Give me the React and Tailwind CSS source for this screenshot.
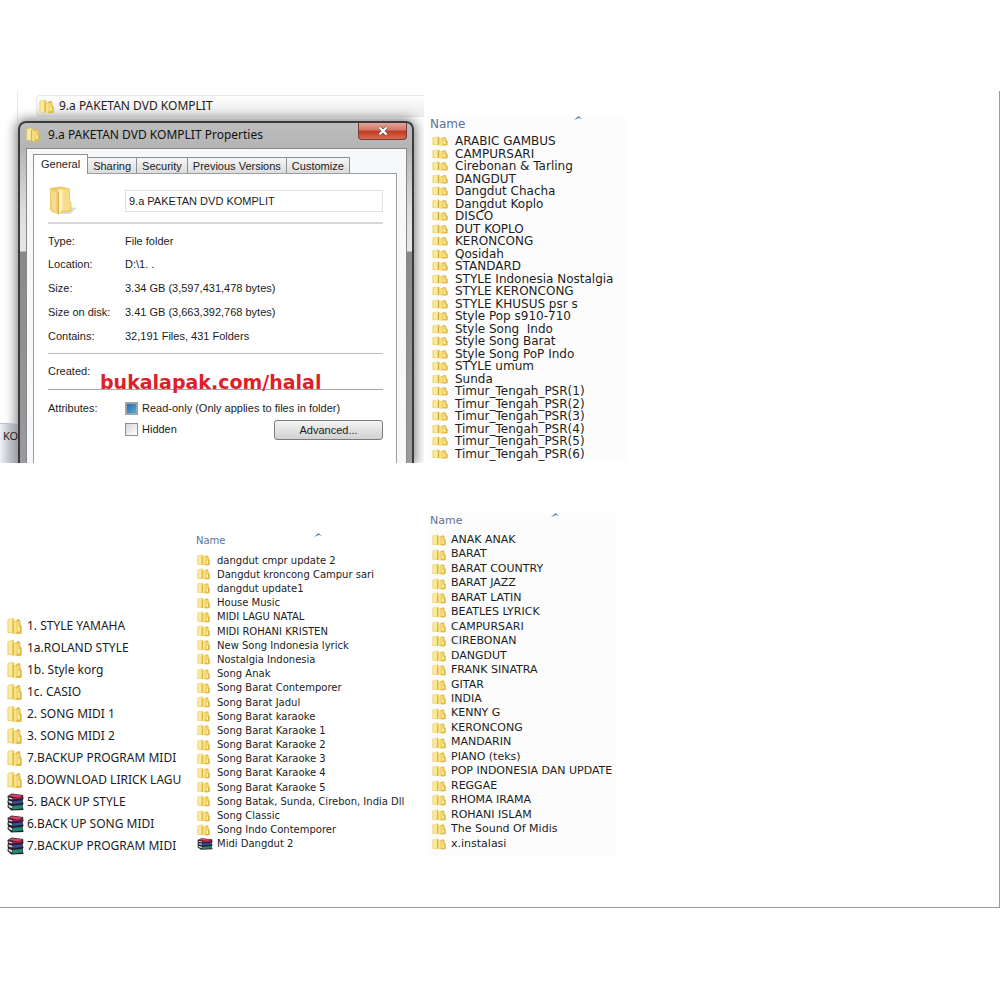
import React, { useEffect, useRef } from "react";

const rootFolders = [
  { name: "1. STYLE YAMAHA" },
  { name: "1a.ROLAND STYLE" },
  { name: "1b. Style korg" },
  { name: "1c. CASIO" },
  { name: "2. SONG MIDI 1" },
  { name: "3. SONG MIDI 2" },
  { name: "7.BACKUP PROGRAM MIDI" },
  { name: "8.DOWNLOAD LIRICK LAGU" },
  { name: "5. BACK UP STYLE", archive: true },
  { name: "6.BACK UP SONG MIDI", archive: true },
  { name: "7.BACKUP PROGRAM MIDI", archive: true },
];

const styleFolders = [
  "ARABIC GAMBUS",
  "CAMPURSARI",
  "Cirebonan & Tarling",
  "DANGDUT",
  "Dangdut Chacha",
  "Dangdut Koplo",
  "DISCO",
  "DUT KOPLO",
  "KERONCONG",
  "Qosidah",
  "STANDARD",
  "STYLE Indonesia Nostalgia",
  "STYLE KERONCONG",
  "STYLE KHUSUS psr s",
  "Style Pop s910-710",
  "Style Song  Indo",
  "Style Song Barat",
  "Style Song PoP Indo",
  "STYLE umum",
  "Sunda",
  "Timur_Tengah_PSR(1)",
  "Timur_Tengah_PSR(2)",
  "Timur_Tengah_PSR(3)",
  "Timur_Tengah_PSR(4)",
  "Timur_Tengah_PSR(5)",
  "Timur_Tengah_PSR(6)",
];

const songFolders = [
  { name: "dangdut cmpr update 2" },
  { name: "Dangdut kroncong Campur sari" },
  { name: "dangdut update1" },
  { name: "House Music" },
  { name: "MIDI LAGU NATAL" },
  { name: "MIDI ROHANI KRISTEN" },
  { name: "New Song Indonesia lyrick" },
  { name: "Nostalgia Indonesia" },
  { name: "Song Anak" },
  { name: "Song Barat Contemporer" },
  { name: "Song Barat Jadul" },
  { name: "Song Barat karaoke" },
  { name: "Song Barat Karaoke 1" },
  { name: "Song Barat Karaoke 2" },
  { name: "Song Barat Karaoke 3" },
  { name: "Song Barat Karaoke 4" },
  { name: "Song Barat Karaoke 5" },
  { name: "Song Batak, Sunda, Cirebon, India Dll" },
  { name: "Song Classic" },
  { name: "Song Indo Contemporer" },
  { name: "Midi Dangdut 2", archive: true },
];

const midiFolders = [
  "ANAK ANAK",
  "BARAT",
  "BARAT COUNTRY",
  "BARAT JAZZ",
  "BARAT LATIN",
  "BEATLES LYRICK",
  "CAMPURSARI",
  "CIREBONAN",
  "DANGDUT",
  "FRANK SINATRA",
  "GITAR",
  "INDIA",
  "KENNY G",
  "KERONCONG",
  "MANDARIN",
  "PIANO (teks)",
  "POP INDONESIA DAN UPDATE",
  "REGGAE",
  "RHOMA IRAMA",
  "ROHANI ISLAM",
  "The Sound Of Midis",
  "x.instalasi",
];

const details = [
  ["Type:", "File folder"],
  ["Location:", "D:\\1. ."],
  ["Size:", "3.34 GB (3,597,431,478 bytes)"],
  ["Size on disk:", "3.41 GB (3,663,392,768 bytes)"],
  ["Contains:", "32,191 Files, 431 Folders"],
];

const FolderIcon = ({ className }) => (
  <svg viewBox="0 0 16 18" preserveAspectRatio="none" className={className} aria-hidden="true">
    <path d="M.5 2.500 6 .8 8 2.200V16.500L.5 16Z" fill="#ecd062" />
    <path d="M1.500 3 5.500 1.600V15.500L1.500 15.300Z" fill="#faeaa0" />
    <path d="M8.500 4 11 3v-1l3 .6.5 5.400 1.200 1v7.500l-3 .8-4.200-.8Z" fill="#dfba45" />
    <path d="M9.500 5 13.200 3.800V14.500l-3.700.6Z" fill="#f1d671" />
    <path d="M6 3.500 9.800 4.800V17.800L6 15.900Z" fill="#f8e185" />
    <path d="M6 3.500V15.900l1 .5V4Z" fill="#cfa634" />
    <path d="M12.300 10h1.200v4.500h-1.200Z" fill="#fff8d2" />
  </svg>
);

const LargeFolderIcon = () => (
  <svg viewBox="0 0 30 31" className="w-[30px] h-[31px]" aria-hidden="true">
    <path d="M20 22 29 23 22 29 8 29Z" fill="#dcdae4" />
    <path d="M2 3 13 1.500 22 3.500V16l1.500 2v8.500L12 28 2 25Z" fill="#eccb68" />
    <path d="M13 4 21 4.500V16l1.200 2v7l-9.200 1Z" fill="#f6dd8b" />
    <path d="M11 4 14.500 5V25L10 29.500V7Z" fill="#fdf2bd" />
    <path d="M2 3 10.500 7.500V29.500L3 26.500Z" fill="#f0cd70" />
    <path d="M3 5 8 8v19l-4-1.600Z" fill="#f6dc92" />
    <path d="M10 7.500v22l1-.8V7Z" fill="#d6ad47" />
  </svg>
);

const ArchiveIcon = ({ className }) => (
  <svg viewBox="0 0 18 18" preserveAspectRatio="none" className={className} aria-hidden="true">
    <path d="M.5 3 5 .5l12 1.500.5 4-1 1 1 4-1 1 1 5-13 .5L.5 14l.5-3L.5 9 1 6Z" fill="#26222c" />
    <path d="m1.500 3 4-1.800 11 1.200-3.500 2Z" fill="#d9456d" />
    <path d="m6 4.800 10.500-1.600v2L6 6.600Z" fill="#b3184b" />
    <path d="m1.500 4.200 4 1v1.400L2 5.800Z" fill="#f1d7dc" />
    <path d="m6 8.400 10.500-1.200v2.600L6 11Z" fill="#3a4c9c" />
    <path d="m1.500 7.600 4 1.200v1.600L2 9.400Z" fill="#dcdde8" />
    <path d="m6 13 10.500-1v3.400L6 16.400Z" fill="#1d8c78" />
    <path d="m1.500 11.800 4 1.400v2.200L2 14Z" fill="#d7e8e3" />
  </svg>
);

const ColumnHeader = ({ className }) => (
  <button type="button" className={`flex items-center text-left text-[#5c7396] ${className}`}>
    Name
  </button>
);

const SortArrow = () => (
  <svg viewBox="0 0 8 4" className="w-2 h-1" aria-hidden="true">
    <path d="M0 4 4.500 0 8 3 5 2Z" fill="#5f86a8" />
  </svg>
);

const Tab = ({ children }) => (
  <button
    type="button"
    role="tab"
    aria-selected="false"
    className="h-4 px-[5px] border border-l-0 border-b-0 border-[#8c9196] bg-linear-to-b from-[#f6f6f6] to-[#dcdcdc] leading-3 whitespace-nowrap"
  >
    {children}
  </button>
);

const PropertiesDialog = () => {
  const readOnly = useRef(null);

  useEffect(() => {
    readOnly.current.indeterminate = true;
  }, []);

  return (
    <section
      role="dialog"
      aria-labelledby="dialog-title"
      className="ml-[18px] mr-[10px] h-[342px] flex flex-col rounded-t-lg border-2 border-b-0 border-[#3b3b3d] bg-[linear-gradient(to_bottom,#bdbdbd_0px,#b4b4b4_24px,#dedede_90px,#e6e6e6_128px,#898989_129px,#9b9b9b_340px)] pl-[6px] pr-[5px] shadow-[0_0_12px_2px_rgba(0,0,0,0.5)]"
    >
      <header className="flex h-[25px] items-start">
        <FolderIcon className="mt-1 w-[14px] h-[15px]" />
        <h1
          id="dialog-title"
          className="ml-2 flex-1 text-[12px] leading-6 font-['Noto_Sans',sans-serif] text-[#111]"
        >
          9.a PAKETAN DVD KOMPLIT Properties
        </h1>
        <button
          type="button"
          aria-label="Close"
          className="flex h-[17px] w-[49px] items-center justify-center rounded-b border border-t-0 border-[#7d3a33] bg-[linear-gradient(to_bottom,#e2a498_0%,#d17565_45%,#c03a22_50%,#d9694e_100%)]"
        >
          <svg viewBox="0 0 12 10" className="w-3 h-[10px]" aria-hidden="true">
            <path d="m2.500 1.500 7 7m0-7-7 7" stroke="#6f4a48" strokeWidth="3.600" />
            <path d="m2.500 1.500 7 7m0-7-7 7" stroke="#fff" strokeWidth="2.200" />
          </svg>
        </button>
      </header>

      <div className="flex flex-1 flex-col border border-b-0 border-[#85898c] bg-[#f7f8f9] pl-[6px] pr-[9px] pt-[5px]">
        <div role="tablist" className="flex items-end">
          <button
            type="button"
            role="tab"
            aria-selected="true"
            className="z-10 -mb-px h-5 px-[7px] border border-b-0 border-[#8c9196] bg-white leading-4 pb-[2px]"
          >
            General
          </button>
          <Tab>Sharing</Tab>
          <Tab>Security</Tab>
          <Tab>Previous Versions</Tab>
          <Tab>Customize</Tab>
        </div>

        <div className="flex-1 border border-b-0 border-[#9a9ea3] bg-white pl-[14px] pr-[13px]">
          <div className="flex h-[50px] items-center border-b-2 border-[#d6d8d9] pt-[5px]">
            <LargeFolderIcon />
            <input
              type="text"
              aria-label="Folder name"
              defaultValue="9.a PAKETAN DVD KOMPLIT"
              className="ml-[47px] h-[22px] min-w-0 flex-1 border border-[#dfe2e4] bg-white px-[3px] text-[11px]"
            />
          </div>

          <dl className="mt-[5px] mb-[5px] grid h-[119px] auto-rows-fr">
            {details.map(([label, value]) => (
              <div key={label} className="flex items-center">
                <dt className="w-[77px]">{label}</dt>
                <dd>{value}</dd>
              </div>
            ))}
          </dl>

          <div className="relative h-[37px] border-t border-b border-t-[#bfbfbf] border-b-[#a6a6a6] leading-[35px]">
            Created:
            <a
              href="#halal"
              className="absolute left-[52px] top-[17px] font-['DejaVu_Sans',sans-serif] text-[19px] leading-[22px] font-bold text-[#df1f2b]"
            >
              bukalapak.com/halal
            </a>
          </div>

          <div className="flex pt-[9px]">
            <span className="w-[77px] leading-[18px]">Attributes:</span>
            <div className="flex-1">
              <label className="flex h-[18px] items-center gap-1">
                <input
                  ref={readOnly}
                  type="checkbox"
                  className="size-[13px] appearance-none border-2 border-[#9aa5ac] bg-linear-to-br from-[#2a6ea6] to-[#4fa9dc]"
                />
                Read-only (Only applies to files in folder)
              </label>
              <div className="mt-[3px] flex items-start justify-between">
                <label className="flex h-[18px] items-center gap-1">
                  <input
                    type="checkbox"
                    className="size-[13px] appearance-none border border-[#8e8f8f] bg-linear-to-br from-[#d4d6d8] to-white"
                  />
                  Hidden
                </label>
                <button
                  type="button"
                  className="h-5 w-[109px] rounded-[3px] border border-[#7c7c7c] bg-linear-to-b from-[#f4f4f4] to-[#d2d2d2] leading-[18px]"
                >
                  Advanced...
                </button>
              </div>
            </div>
          </div>
        </div>
      </div>
    </section>
  );
};

const App = () => {
  return (
    <div className="min-h-screen bg-white pt-[91px] font-['Liberation_Sans',Arial,sans-serif] text-[11px] text-[#1c1c1c]">
      <main className="border-r border-b border-[#9b9b9b] pb-[50px]">
        <div className="grid grid-cols-[424px_1fr] gap-x-1">
          <div className="relative h-[372px] overflow-hidden bg-white">
            <div className="ml-[17px] h-[30px] border-l border-[#e1e8ee] pl-[18px] pt-1">
              <div className="flex h-[22px] items-center rounded-l border border-r-0 border-[#e8e8e8] bg-linear-to-b from-[#fdfdfd] to-[#ececec] pl-[2px] text-[12px] font-['Noto_Sans',sans-serif]">
                <FolderIcon className="w-[15px] h-[15px]" />
                <span className="ml-[5px]">9.a PAKETAN DVD KOMPLIT</span>
              </div>
            </div>
            <PropertiesDialog />
            <span className="absolute left-0 top-[332px] h-10 w-[18px] border-t border-[#a9c3e4] bg-linear-to-r from-[#eef1f7] to-[#9a9ca3] pl-[3px] pt-1 text-[11px] font-['Noto_Sans',sans-serif]">
              KO
            </span>
          </div>

          <section className="mt-[25px] w-[198px] self-start bg-[#fcfcfc] pb-px font-['DejaVu_Sans',sans-serif] text-[12px] leading-3">
            <div className="flex h-[19px] items-start">
              <ColumnHeader className="mt-[2px] ml-[2px] w-[144px]" />
              <SortArrow />
            </div>
            <ul className="grid h-[325px] auto-rows-fr pl-1">
              {styleFolders.map((name) => (
                <li key={name} className="flex items-center gap-[7px] whitespace-pre">
                  <FolderIcon className="h-[10px] w-4" />
                  {name}
                </li>
              ))}
            </ul>
          </section>
        </div>

        <div className="mt-[50px] grid grid-cols-[196px_228px_1fr] gap-x-1">
          <ul className="self-end -mr-1 pl-[7px] font-['Noto_Sans',sans-serif] text-[12px]">
            {rootFolders.map((item, index) => (
              <li key={index} className="flex h-[22px] items-center whitespace-nowrap">
                <span className="w-5">
                  {item.archive ? (
                    <ArchiveIcon className="h-[18px] w-[17px]" />
                  ) : (
                    <FolderIcon className="h-[18px] w-[15px]" />
                  )}
                </span>
                {item.name}
              </li>
            ))}
          </ul>

          <section className="-ml-1 self-end pb-[6px] font-['DejaVu_Sans',sans-serif] text-[10px]">
            <div className="flex h-5 items-start">
              <ColumnHeader className="w-[118px]" />
              <SortArrow />
            </div>
            <ul className="grid h-[298px] auto-rows-fr pl-px">
              {songFolders.map((item) => (
                <li key={item.name} className="flex items-center whitespace-nowrap">
                  <span className="w-5">
                    {item.archive ? (
                      <ArchiveIcon className="h-3 w-4" />
                    ) : (
                      <FolderIcon className="h-3 w-[13px]" />
                    )}
                  </span>
                  {item.name}
                </li>
              ))}
            </ul>
          </section>

          <section className="-ml-1 w-[188px] bg-[#fcfcfc] pb-[6px] font-['DejaVu_Sans',sans-serif] text-[11px]">
            <div className="flex h-5 items-start">
              <ColumnHeader className="ml-[2px] w-[121px]" />
              <SortArrow />
            </div>
            <ul className="grid h-[318px] auto-rows-fr pl-1">
              {midiFolders.map((name) => (
                <li key={name} className="flex items-center gap-[5px] whitespace-nowrap">
                  <FolderIcon className="h-3 w-[14px]" />
                  {name}
                </li>
              ))}
            </ul>
          </section>
        </div>
      </main>
    </div>
  );
};

export default App;
